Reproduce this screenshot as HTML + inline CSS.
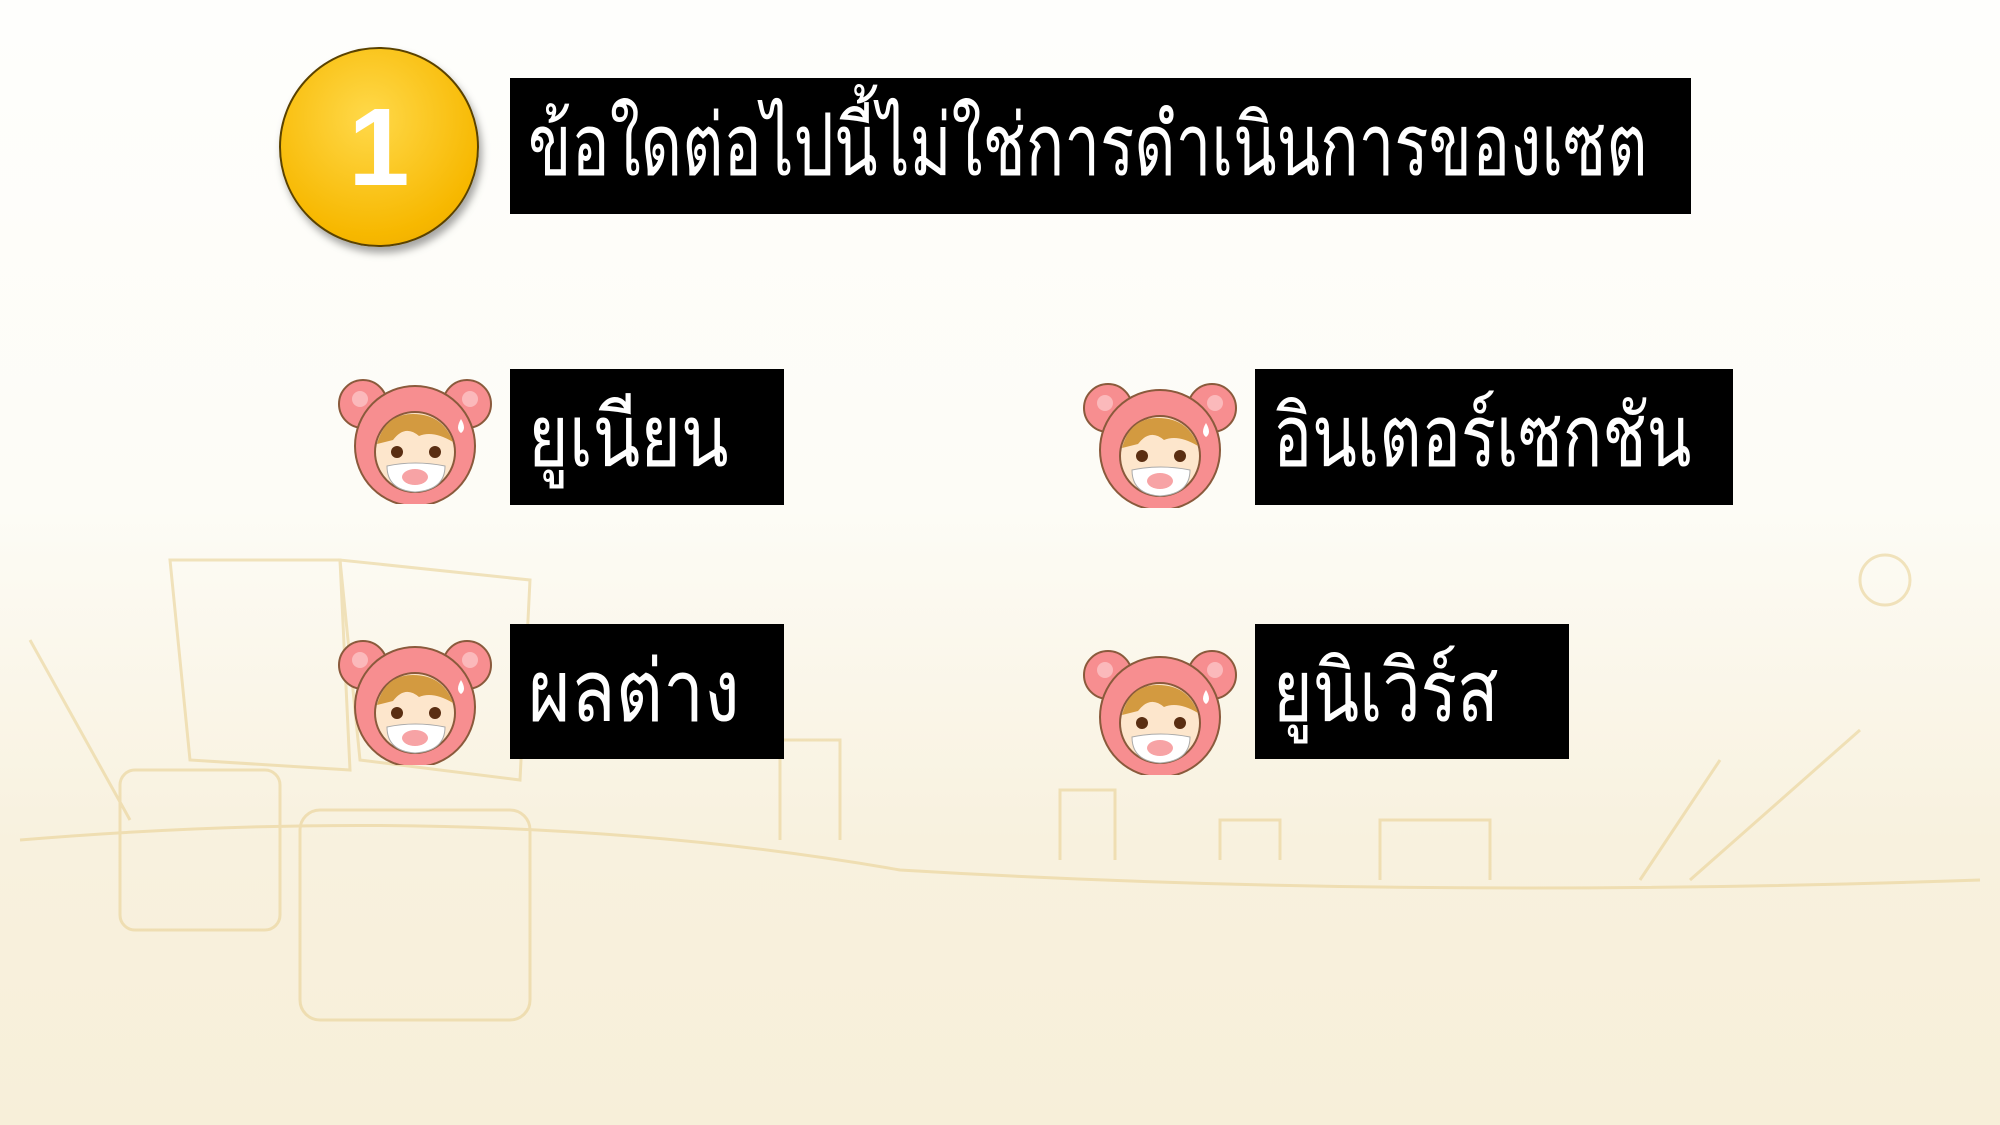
<!DOCTYPE html>
<html><head><meta charset="utf-8"><style>
html,body{margin:0;padding:0}
body{width:2000px;height:1125px;position:relative;overflow:hidden;font-family:"Liberation Sans","DejaVu Sans",sans-serif;
background:linear-gradient(180deg,#fefefc 0%,#fdfcf6 45%,#f8f1de 75%,#f7efd9 100%);}
.box{position:absolute;background:#000;color:#fff;font-size:86px;line-height:1;display:flex;align-items:center;padding-left:18px;box-sizing:border-box;white-space:nowrap;overflow:hidden}
.box span{display:inline-block;transform-origin:left center}
.num{position:absolute;left:279px;top:47px;width:196px;height:196px;border-radius:50%;background:radial-gradient(circle at 45% 35%,#ffd94a,#f7b800 70%,#e9a600);border:2px solid #5a4200;box-shadow:3px 6px 8px rgba(0,0,0,.35);color:#fff;font-size:110px;font-weight:bold;display:flex;align-items:center;justify-content:center}
.ic{position:absolute;width:160px;height:130px}
</style></head><body>
<svg style="position:absolute;left:0;top:0" width="2000" height="1125">
<g fill="none" stroke="#e8cf8f" stroke-width="3" opacity=".55">
<path d="M20 840 Q500 800 900 870 Q1400 900 1980 880"/>
<path d="M170 560 L190 760 L350 770 L340 560 Z"/>
<path d="M340 560 L360 760 L520 780 L530 580 Z"/>
<rect x="120" y="770" width="160" height="160" rx="15"/>
<rect x="300" y="810" width="230" height="210" rx="20"/>
<path d="M780 840 v-100 h60 v100 M1060 860 v-70 h55 v70 M1220 860 v-40 h60 v40 M1380 880 v-60 h110 v60"/>
<path d="M30 640 L130 820 M1690 880 L1860 730 M1640 880 L1720 760"/>
<circle cx="1885" cy="580" r="25"/>
</g></svg>
<svg width="0" height="0" style="position:absolute"><defs>
<g id="bear">
<circle cx="28" cy="30" r="24" fill="#f78e90" stroke="#8a5a3c" stroke-width="2"/>
<circle cx="132" cy="30" r="24" fill="#f78e90" stroke="#8a5a3c" stroke-width="2"/>
<circle cx="80" cy="72" r="60" fill="#f78e90" stroke="#8a5a3c" stroke-width="2"/>
<circle cx="80" cy="78" r="40" fill="#fde6cc" stroke="#8a5a3c" stroke-width="2"/>
<path d="M42 70 Q50 40 78 40 Q108 40 118 68 Q98 56 84 62 Q70 50 58 66 Z" fill="#d39a40"/>
<circle cx="62" cy="78" r="6" fill="#5a2e12"/><circle cx="100" cy="78" r="6" fill="#5a2e12"/>
<path d="M52 92 Q80 86 110 92 Q110 116 80 118 Q52 116 52 92Z" fill="#fff" stroke="#aaa"/>
<ellipse cx="80" cy="103" rx="13" ry="8" fill="#f7a3a5"/>
<path d="M126 45 q-6 10 0 14 q6-4 0-14z" fill="#fff"/>
<circle cx="25" cy="25" r="8" fill="#fbb9bb"/><circle cx="135" cy="25" r="8" fill="#fbb9bb"/>
</g></defs></svg>
<div class="num">1</div>
<div class="box" style="left:510px;top:78px;width:1181px;height:136px"><span style="transform:scaleX(.74)">ข้อใดต่อไปนี้ไม่ใช่การดำเนินการของเซต</span></div>
<svg class="ic" style="left:335px;top:374px" viewBox="0 0 160 130"><use href="#bear"/></svg>
<div class="box" style="left:510px;top:369px;width:274px;height:136px"><span style="transform:scaleX(.81)">ยูเนียน</span></div>
<svg class="ic" style="left:1080px;top:378px" viewBox="0 0 160 130"><use href="#bear"/></svg>
<div class="box" style="left:1255px;top:369px;width:478px;height:136px"><span style="transform:scaleX(.76)">อินเตอร์เซกชัน</span></div>
<svg class="ic" style="left:335px;top:635px" viewBox="0 0 160 130"><use href="#bear"/></svg>
<div class="box" style="left:510px;top:624px;width:274px;height:135px"><span style="transform:scaleX(.85)">ผลต่าง</span></div>
<svg class="ic" style="left:1080px;top:645px" viewBox="0 0 160 130"><use href="#bear"/></svg>
<div class="box" style="left:1255px;top:624px;width:314px;height:135px"><span style="transform:scaleX(.79)">ยูนิเวิร์ส</span></div>
</body></html>
